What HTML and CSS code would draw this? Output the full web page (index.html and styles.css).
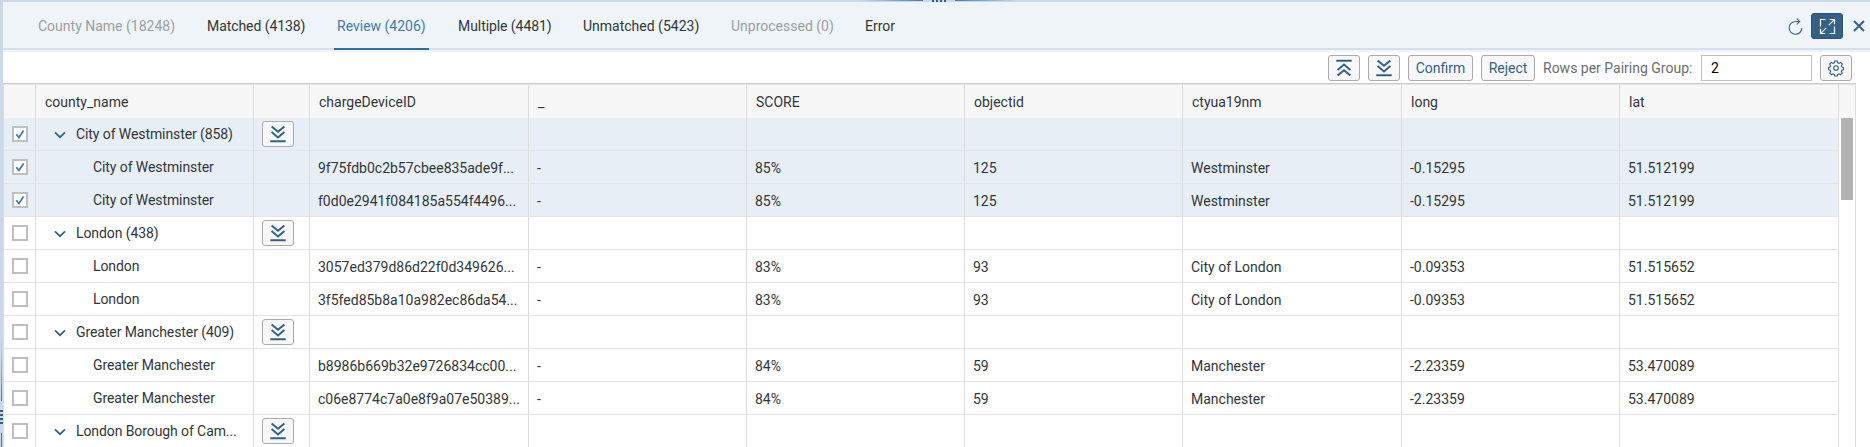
FILE: index.html
```html
<!DOCTYPE html>
<html lang="en">
<head>
<meta charset="utf-8">
<title>Match Results</title>
<link rel="stylesheet" href="styles.css">
</head>
<body>
<svg class="defs" aria-hidden="true">
  <symbol id="down" viewBox="0 0 16 18"><path d="M1.6 1.4L8 6.8l6.4-5.4M1.6 7L8 12.4 14.4 7M.3 16.3h15.4"/></symbol>
  <symbol id="up" viewBox="0 0 16 18"><path d="M1.6 16.6L8 11.2l6.4 5.4M1.6 11L8 5.6l6.4 5.4M.3 1.7h15.4"/></symbol>
  <symbol id="chev" viewBox="0 0 12 8"><path d="M1 1.3l5 4.9 5-4.9"/></symbol>
  <symbol id="tick" viewBox="0 0 12 12"><path d="M2.3 6.2l2.6 3.3L9.6 2.6"/></symbol>
</svg>
<div class="split-top"><i class="fade-l"></i><i class="grip"></i><i class="fade-r"></i></div>
<div class="split-left"><i class="vfade-t"></i><i class="vgrip"></i><i class="vfade-b"></i></div>
<main class="panel">
  <header class="tabs">
    <nav class="tab-list">
      <span class="tab off t1">County Name (18248)</span>
      <span class="tab t2">Matched (4138)</span>
      <span class="tab on t3">Review (4206)</span>
      <span class="tab t4">Multiple (4481)</span>
      <span class="tab t5">Unmatched (5423)</span>
      <span class="tab off t6">Unprocessed (0)</span>
      <span class="tab t7">Error</span>
    </nav>
    <div class="actions">
      <svg class="refresh" viewBox="0 0 15 17"><path d="M11.4 3.500H7.500A6.400 6.400 0 1 0 13.900 10M8.800.6l2.900 2.900-2.900 2.900"/></svg>
      <button class="full"><svg viewBox="0 0 17 17"><path d="M6.500 1.500h-5v7M10.500 15.500h5v-7M10.700 1.500h4.800v4.800M15.300 1.700L9.800 7.200M6.300 15.500H1.500v-4.800M1.700 15.300l5.500-5.500"/></svg></button>
      <svg class="close" viewBox="0 0 12 12"><path d="M1 1l10 10M11 1L1 11"/></svg>
    </div>
  </header>
  <div class="toolbar">
    <button class="btn icon"><svg><use href="#up"/></svg></button>
    <button class="btn icon"><svg><use href="#down"/></svg></button>
    <button class="btn confirm">Confirm</button>
    <button class="btn reject">Reject</button>
    <label class="label">Rows per Pairing Group:</label>
    <div class="input">2</div>
    <button class="btn icon gear"><svg viewBox="0 0 18 18"><circle cx="9" cy="9" r="2.6"/><path d="M7.600 1.200h2.800l.4 1.900 1.600.7 1.700-1.100 2 2-1.100 1.700.6 1.500 1.900.4v2.600l-1.900.5-.6 1.500 1.100 1.700-2 2-1.700-1.100-1.600.7-.4 1.800H7.600l-.4-1.800-1.600-.7-1.700 1.100-2-2L3 12.900l-.7-1.500-1.700-.5V8.300l1.700-.4L3 6.400 1.900 4.700l2-2 1.700 1.100 1.600-.7z"/></svg></button>
  </div>
  <section class="table" id="table"></section>
</main>
<script src="table.js"></script>
</body>
</html>
```
FILE: styles.css
```css
* { box-sizing: border-box; }
body {
  margin: 0;
  width: 1870px;
  height: 447px;
  overflow: hidden;
  position: relative;
  background: #c9d9e8;
  font: 14px/16px Roboto, "Liberation Sans", sans-serif;
  color: #32363a;
}
.defs { display: none; }
svg { fill: none; stroke: #346187; display: block; }
.split-top {
  position: absolute;
  top: 0;
  left: 860px;
  height: 2px;
  display: flex;
  gap: 9px;
}
.fade-l, .fade-r { width: 63px; height: 1px; }
.fade-l { background: linear-gradient(to right, transparent, #427cac); }
.fade-r { background: linear-gradient(to left, transparent, #427cac); }
.grip { width: 14px; background: repeating-linear-gradient(to right, #346187 0 2px, transparent 2px 4px); }
.split-left {
  position: absolute;
  left: 0;
  top: 338px;
  width: 3px;
  height: 109px;
  overflow: hidden;
  display: flex;
  flex-direction: column;
  gap: 9px;
}
.vfade-t { width: 1px; height: 63px; margin-left: 1px; background: linear-gradient(to bottom, transparent, #427cac); }
.vfade-b { width: 1px; height: 14px; margin-left: 1px; background: #427cac; }
.vgrip { height: 14px; background: repeating-linear-gradient(to bottom, #346187 0 2px, transparent 2px 4px); }
.panel { margin-left: 3px; padding-top: 2px; background: #fff; background-clip: content-box; height: 447px; }
.tabs {
  height: 50px;
  background: #eff4f9;
  display: flex;
  justify-content: space-between;
  box-shadow: inset 0 -2px #eff4f9, inset 0 -4px #d1e0ee;
}
.tab-list { display: flex; gap: 26px; padding-left: 32px; height: 48px; }
.tab { padding: 16px 3px 0; height: 48px; white-space: nowrap; }
.off { color: #9b9fa2; }
.on { color: #427cac; border-bottom: 2px solid #346f9b; }
.t1 { width: 143px; }
.t2 { width: 104px; letter-spacing: -.07px; }
.t3 { width: 95px; }
.t4 { width: 99px; letter-spacing: -.07px; }
.t5 { width: 122px; }
.t6 { width: 108px; }
.actions { display: flex; align-items: center; height: 48px; padding-right: 5px; }
.refresh { width: 15px; height: 17px; margin-right: 8px; stroke-width: 1.1; }
.full {
  width: 32px;
  height: 26px;
  border: 1px solid #2b5273;
  border-radius: 3px;
  background: #346187;
  padding: 0;
  margin-right: 10px;
  display: grid;
  place-items: center;
}
.full svg { width: 17px; height: 17px; stroke: #fff; stroke-width: 1.2; }
.close { width: 12px; height: 12px; stroke-width: 2; }
.toolbar { height: 31px; padding: 3px 18px 0 0; display: flex; justify-content: flex-end; gap: 8px; }
.btn {
  height: 26px;
  border: 1px solid #ababab;
  border-radius: 3px;
  background: #f7f7f7;
  color: #346187;
  font: inherit;
  padding: 0;
  display: grid;
  place-items: center;
}
.icon { width: 32px; }
.icon svg { width: 16px; height: 18px; stroke-width: 2; }
.gear svg { stroke-width: 1.25; }
.confirm { width: 65px; }
.reject { width: 54px; }
.label { width: 150px; color: #6a6d70; padding-top: 5px; white-space: nowrap; }
.input { width: 111px; height: 26px; border: 1px solid #bfbfbf; padding: 4px 9px; color: #000; }
.table {
  width: 1853px;
  height: 364px;
  overflow: hidden;
  position: relative;
  border-top: 1px solid #ccc;
  border-left: 1px solid #ddd;
  border-right: 1px solid #ddd;
}
.row {
  display: grid;
  grid-template-columns: 32px 218px 56px 219px 218px 218px 218px 219px 218px 219px;
  height: 33px;
}
.row.last { height: 32px; }
.row.last .cell { border-bottom: 0; }
.head { height: 34px; border-top: 1px solid #e5e5e5; background: #f7f7f7; }
.cell {
  border-right: 1px solid #ddd;
  border-bottom: 1px solid #e5e5e5;
  padding: 9px 8px 0;
  white-space: nowrap;
  overflow: hidden;
}
.head .cell { border-bottom: 0; padding: 9px 9px 0; }
.selected .cell { background: #e7eef6; }
.cell.pick { padding: 8px 0 0 8px; }
.cell.name { padding-top: 8px; display: flex; letter-spacing: -.09px; }
.parent .name { padding-left: 18px; gap: 10px; }
.child .name { padding-left: 57px; }
.name svg { width: 12px; height: 8px; margin-top: 5px; stroke-width: 1.7; flex: none; }
.cell.act { padding: 3px 0 0 8px; }
.box { width: 16px; height: 16px; border: 2px solid #bfbfbf; background: #fff; }
.box svg { width: 12px; height: 12px; stroke: #427cac; stroke-width: 1.8; }
.thumb { position: absolute; right: 2px; top: 34px; width: 12px; height: 82px; background: #b2b2b2; }
```
FILE: table.js
```js
const heads = ["", "county_name", "", "chargeDeviceID", "_", "SCORE", "objectid", "ctyua19nm", "long", "lat"];
const groups = [
  { label: "City of Westminster (858)", name: "City of Westminster", on: true, ids: ["9f75fdb0c2b57cbee835ade9f...", "f0d0e2941f084185a554f4496..."], rest: ["-", "85%", "125", "Westminster", "-0.15295", "51.512199"] },
  { label: "London (438)", name: "London", ids: ["3057ed379d86d22f0d349626...", "3f5fed85b8a10a982ec86da54..."], rest: ["-", "83%", "93", "City of London", "-0.09353", "51.515652"] },
  { label: "Greater Manchester (409)", name: "Greater Manchester", ids: ["b8986b669b32e9726834cc00...", "c06e8774c7a0e8f9a07e50389..."], rest: ["-", "84%", "59", "Manchester", "-2.23359", "53.470089"] },
  { label: "London Borough of Cam...", last: true, ids: [], rest: [] }
];
const cell = (html, cls = "") => `<div class="cell ${cls}">${html}</div>`;
const box = on => cell(`<div class="box">${on ? '<svg><use href="#tick"/></svg>' : ""}</div>`, "pick");
let out = `<div class="row head">${heads.map(h => cell(h)).join("")}</div>`;
for (const g of groups) {
  const sel = g.on ? " selected" : "";
  out += `<div class="row parent${sel}${g.last ? " last" : ""}">${box(g.on)}${cell(`<svg><use href="#chev"/></svg><span>${g.label}</span>`, "name")}${cell('<button class="btn icon"><svg><use href="#down"/></svg></button>', "act")}${cell("").repeat(7)}</div>`;
  for (const id of g.ids) {
    out += `<div class="row child${sel}">${box(g.on)}${cell(g.name, "name")}${cell("")}${cell(id)}${g.rest.map(v => cell(v)).join("")}</div>`;
  }
}
document.getElementById("table").innerHTML = out + '<div class="thumb"></div>';
```
